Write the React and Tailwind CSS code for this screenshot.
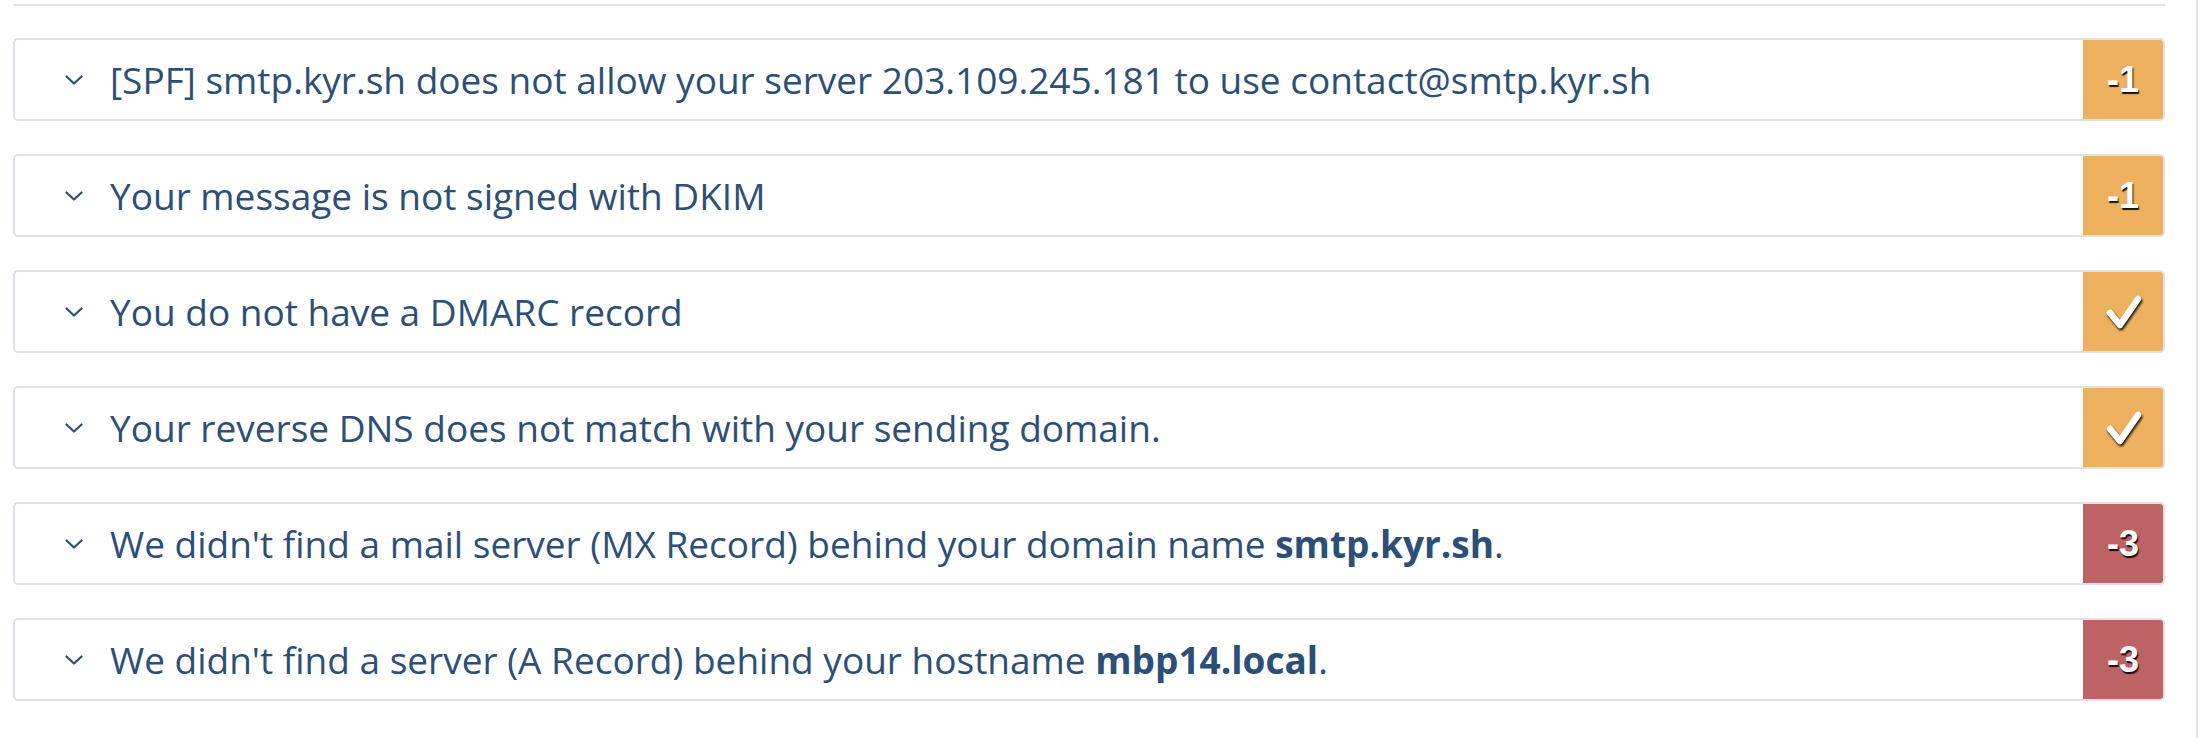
import React from "react";

const checks = [
  { id: 1, text: <>[SPF] smtp.kyr.sh does not allow your server 203.109.245.181 to use contact@smtp.kyr.sh</>, score: "-1", tone: "warn" },
  { id: 2, text: <>Your message is not signed with DKIM</>, score: "-1", tone: "warn" },
  { id: 3, text: <>You do not have a DMARC record</>, score: "ok", tone: "warn" },
  { id: 4, text: <>Your reverse DNS does not match with your sending domain.</>, score: "ok", tone: "warn" },
  {
    id: 5,
    text: (
      <>
        We didn't find a mail server (MX Record) behind your domain name <b className="font-bold">smtp.kyr.sh</b>.
      </>
    ),
    score: "-3",
    tone: "bad",
  },
  {
    id: 6,
    text: (
      <>
        We didn't find a server (A Record) behind your hostname <b className="font-bold">mbp14.local</b>.
      </>
    ),
    score: "-3",
    tone: "bad",
  },
];

const Chevron = () => (
  <svg width="18" height="10" viewBox="0 0 18 10" className="shrink-0">
    <polyline points="1.5,1.5 9,8.5 16.5,1.5" fill="none" stroke="#2c4f77" strokeWidth="2.2" strokeLinecap="round" strokeLinejoin="round" />
  </svg>
);

const Check = () => (
  <svg width="80" height="79" viewBox="0 0 80 79" className="drop-shadow-[1px_2px_1px_rgba(0,0,0,0.9)]">
    <polyline points="27,41 37,53 55,27" fill="none" stroke="#ffffff" strokeWidth="6.5" strokeLinecap="round" strokeLinejoin="round" />
  </svg>
);

const App = () => {
  return (
    <div className="flex min-h-[738px] w-full bg-white pr-[4px]">
      <div className="flex-1 border-r-2 border-[#dee2e6] pl-[13px] pr-[31px] pt-[4px]">
        {/* top rule */}
        <div className="h-[2px] bg-[#dee2e6]"></div>

        <div className="mt-[32px] flex flex-col gap-[33px]">
          {checks.map((c) => (
            <div
              key={c.id}
              className="flex h-[83px] items-stretch rounded-[5px] border-2 border-[#dee2e6] overflow-hidden"
            >
              <div className="flex flex-1 items-center pl-[50px]">
                <Chevron />
                <p className="ml-[27px] text-[37px] leading-none text-[#2c4f77] font-['Open_Sans',sans-serif] whitespace-nowrap">
                  {c.text}
                </p>
              </div>
              <div
                className={`flex w-[80px] items-center justify-center ${
                  c.tone === "bad" ? "bg-[#bd6265]" : "bg-[#ecb05f]"
                }`}
              >
                {c.score === "ok" ? (
                  <Check />
                ) : (
                  <span className="text-[36px] font-bold text-white font-['Liberation_Sans',Arial,sans-serif] [text-shadow:1px_2px_1px_rgba(0,0,0,0.9)]">
                    {c.score}
                  </span>
                )}
              </div>
            </div>
          ))}
        </div>
      </div>
    </div>
  );
};

export default App;
